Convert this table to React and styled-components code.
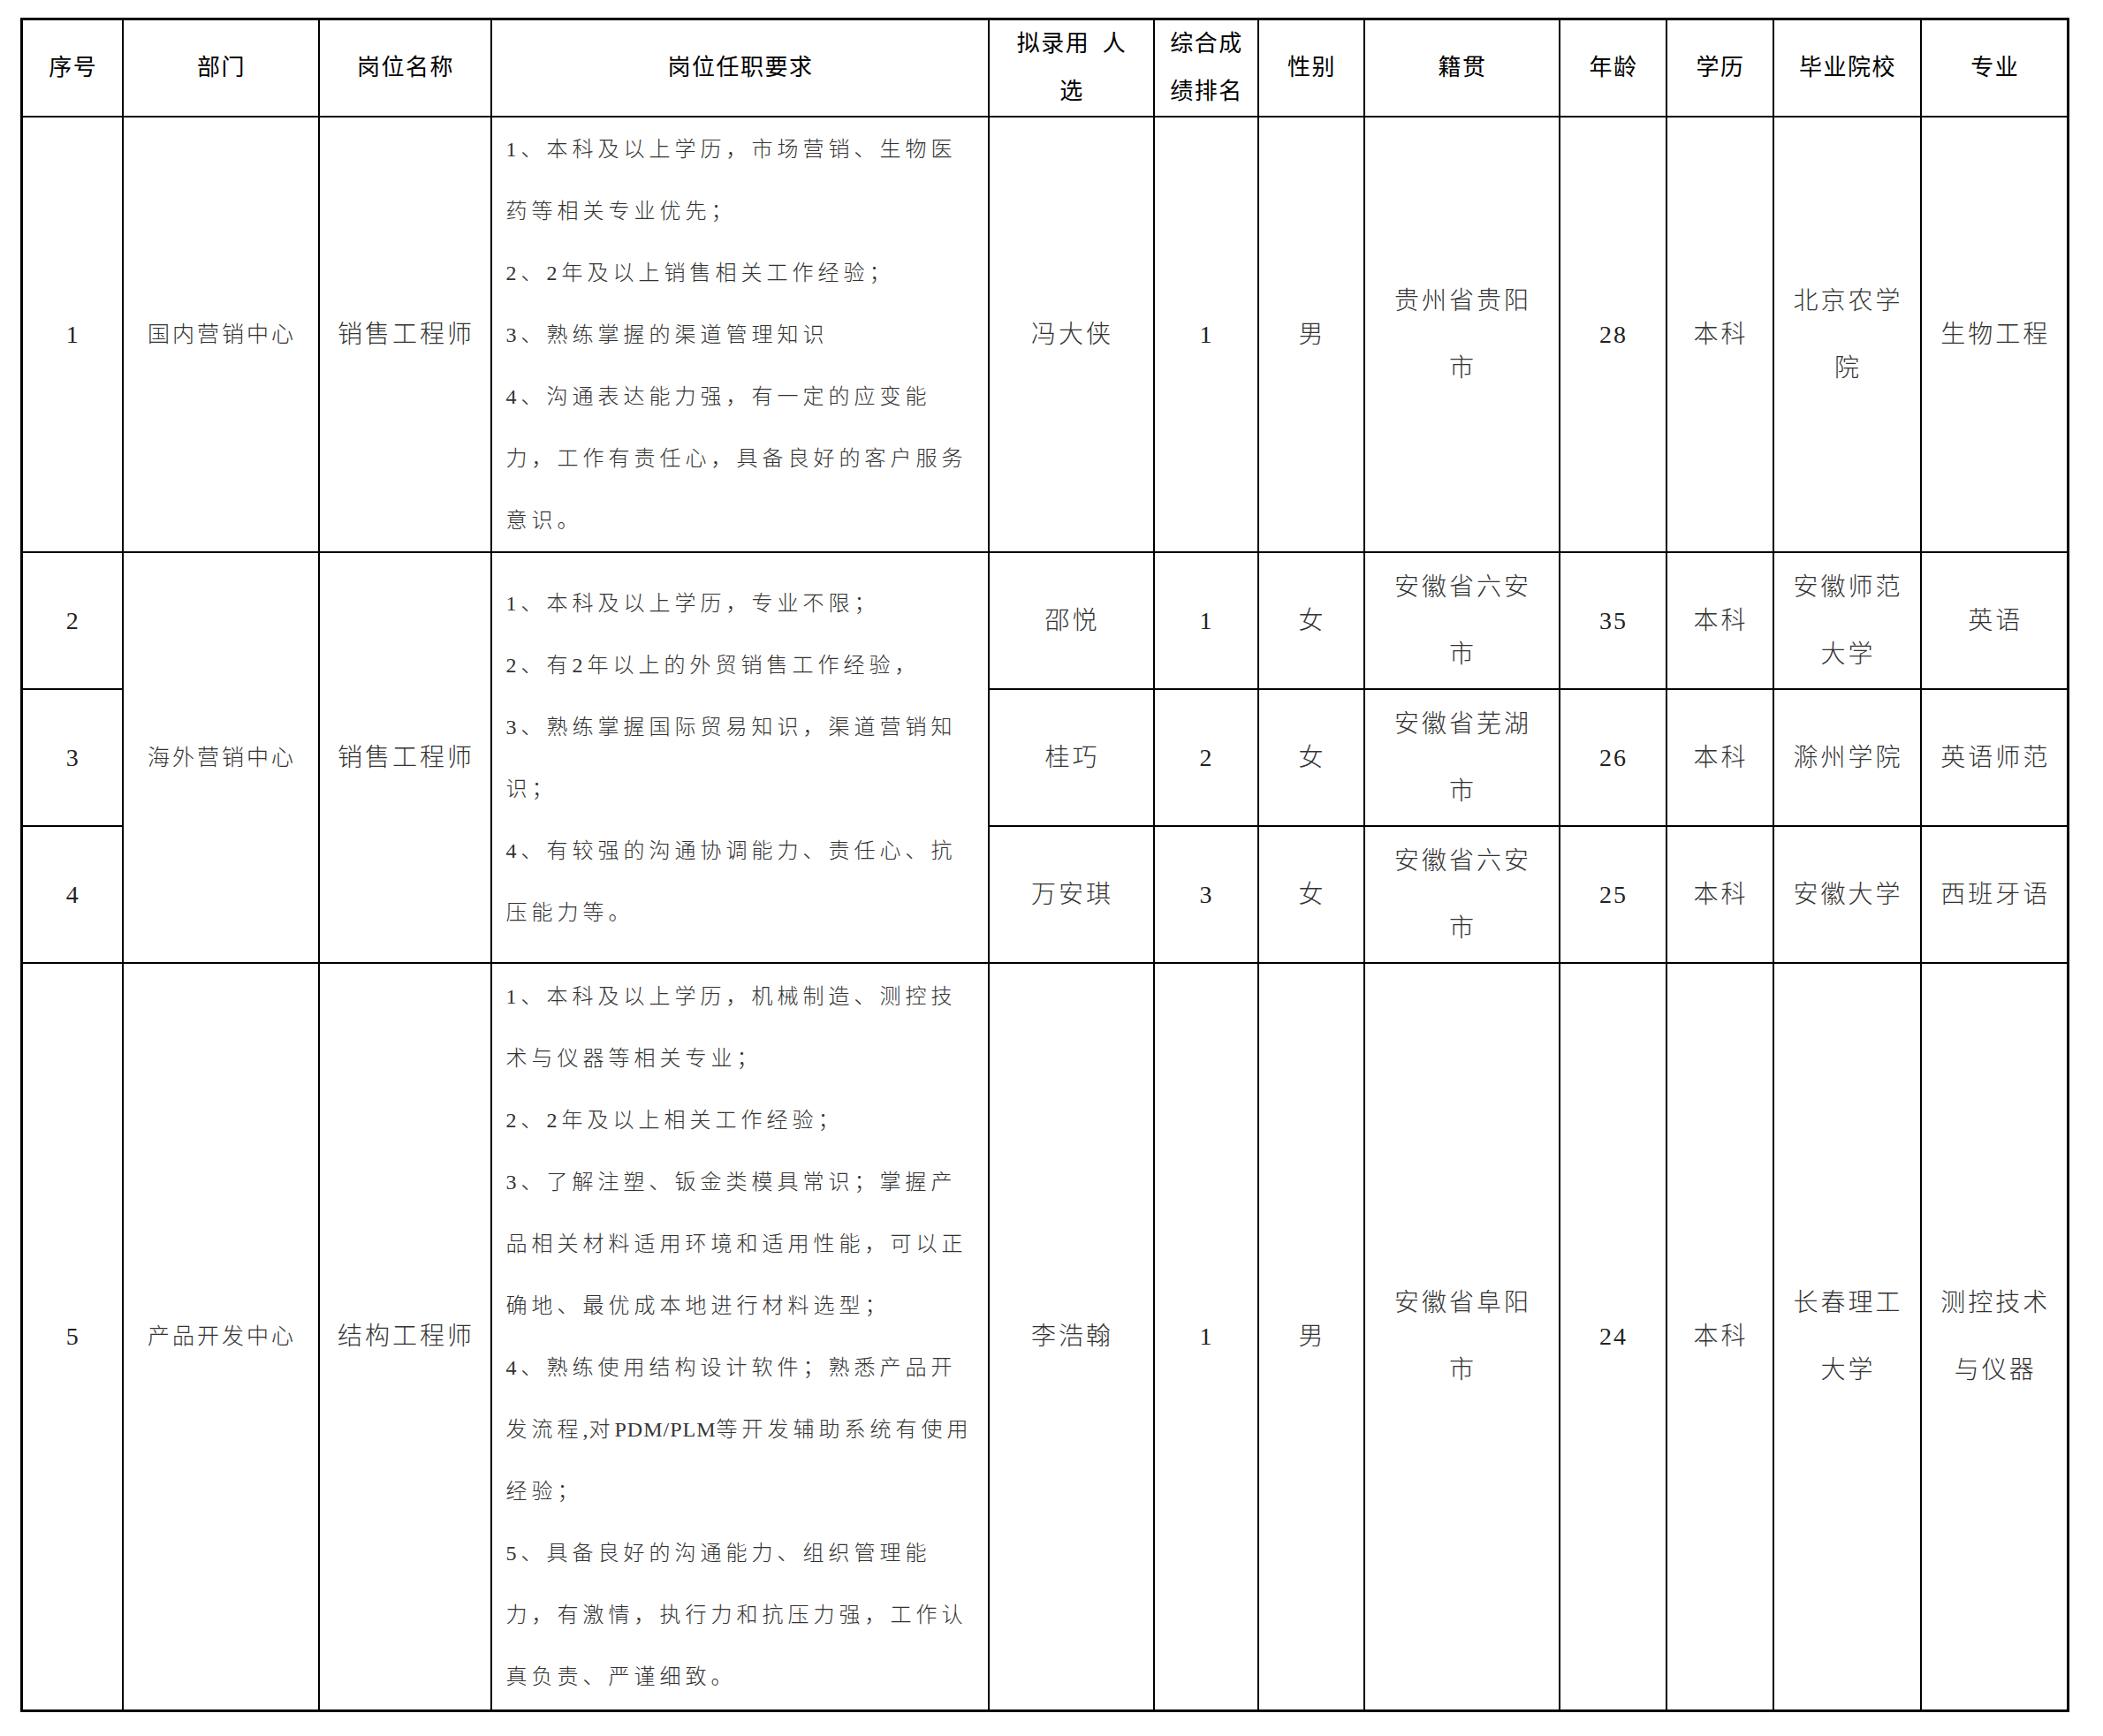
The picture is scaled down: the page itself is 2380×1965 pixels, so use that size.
import styled, { createGlobalStyle, css } from "styled-components";

// ── Data ──────────────────────────────────────────────────

const columns = [
  { key: "no", label: "序号", width: 114 },
  { key: "dept", label: "部门", width: 222 },
  { key: "post", label: "岗位名称", width: 195 },
  { key: "req", label: "岗位任职要求", width: 563 },
  { key: "name", label: "拟录用\u2002人\n选", width: 187 },
  { key: "rank", label: "综合成\n绩排名", width: 118 },
  { key: "sex", label: "性别", width: 120 },
  { key: "origin", label: "籍贯", width: 221 },
  { key: "age", label: "年龄", width: 121 },
  { key: "edu", label: "学历", width: 121 },
  { key: "school", label: "毕业院校", width: 167 },
  { key: "major", label: "专业", width: 167 },
];

const tableWidth = columns.reduce((sum, c) => sum + c.width, 0);

const groups = [
  {
    dept: "国内营销中心",
    post: "销售工程师",
    req: [
      "1、本科及以上学历，市场营销、生物医",
      "药等相关专业优先；",
      "2、2年及以上销售相关工作经验；",
      "3、熟练掌握的渠道管理知识",
      "4、沟通表达能力强，有一定的应变能",
      "力，工作有责任心，具备良好的客户服务",
      "意识。",
    ],
    people: [
      { no: 1, name: "冯大侠", rank: 1, sex: "男", origin: "贵州省贵阳\n市", age: 28, edu: "本科", school: "北京农学\n院", major: "生物工程", h: 493 },
    ],
  },
  {
    dept: "海外营销中心",
    post: "销售工程师",
    req: [
      "1、本科及以上学历，专业不限；",
      "2、有2年以上的外贸销售工作经验，",
      "3、熟练掌握国际贸易知识，渠道营销知",
      "识；",
      "4、有较强的沟通协调能力、责任心、抗",
      "压能力等。",
    ],
    people: [
      { no: 2, name: "邵悦", rank: 1, sex: "女", origin: "安徽省六安\n市", age: 35, edu: "本科", school: "安徽师范\n大学", major: "英语", h: 155 },
      { no: 3, name: "桂巧", rank: 2, sex: "女", origin: "安徽省芜湖\n市", age: 26, edu: "本科", school: "滁州学院", major: "英语师范", h: 155 },
      { no: 4, name: "万安琪", rank: 3, sex: "女", origin: "安徽省六安\n市", age: 25, edu: "本科", school: "安徽大学", major: "西班牙语", h: 155 },
    ],
  },
  {
    dept: "产品开发中心",
    post: "结构工程师",
    req: [
      "1、本科及以上学历，机械制造、测控技",
      "术与仪器等相关专业；",
      "2、2年及以上相关工作经验；",
      "3、了解注塑、钣金类模具常识；掌握产",
      "品相关材料适用环境和适用性能，可以正",
      "确地、最优成本地进行材料选型；",
      "4、熟练使用结构设计软件；熟悉产品开",
      "发流程,对PDM/PLM等开发辅助系统有使用",
      "经验；",
      "5、具备良好的沟通能力、组织管理能",
      "力，有激情，执行力和抗压力强，工作认",
      "真负责、严谨细致。",
    ],
    people: [
      { no: 5, name: "李浩翰", rank: 1, sex: "男", origin: "安徽省阜阳\n市", age: 24, edu: "本科", school: "长春理工\n大学", major: "测控技术\n与仪器", h: 846 },
    ],
  },
];

// ── Styles ────────────────────────────────────────────────

const GlobalStyle = createGlobalStyle`
  html, body {
    margin: 0;
    background: #ffffff;
  }
  body {
    font-family: "Liberation Serif", "Noto Sans CJK SC", serif;
    color: #333;
  }
`;

const Page = styled.div`
  min-height: 1965px;
  box-sizing: border-box;
  padding: 20px 0 0 23px;
  background: #ffffff;
`;

const Sheet = styled.table`
  border-collapse: collapse;
  table-layout: fixed;
  width: ${p => p.$w}px;
  border: 3px solid #000;
`;

const Row = styled.tr`
  height: ${p => p.$h}px;
`;

const HeadCell = styled.th`
  border: 2px solid #000;
  padding: 0 4px 0 6px;
  font-weight: 400;
  font-size: 26px;
  letter-spacing: 1.5px;
  line-height: 54px;
  color: #000;
  text-align: center;
  vertical-align: middle;
  white-space: pre-line;
`;

const kinds = {
  num: css`
    font-size: 28px;
    letter-spacing: 2px;
    padding-left: 8px;
    color: #222;
  `,
  dept: css`
    font-size: 25px;
    letter-spacing: 3px;
    padding-left: 9px;
  `,
  text: css`
    font-size: 28px;
    letter-spacing: 3px;
    padding-left: 9px;
  `,
};

const Cell = styled.td`
  border: 2px solid #000;
  padding: 0 6px;
  font-weight: 300;
  line-height: 76px;
  text-align: center;
  vertical-align: middle;
  white-space: pre-line;
  ${p => kinds[p.$kind || "text"]}
`;

const ReqCell = styled.td`
  border: 2px solid #000;
  padding: 0 10px 0 16px;
  vertical-align: middle;
  text-align: left;
`;

const ReqLine = styled.div`
  font-size: 24px;
  font-weight: 300;
  letter-spacing: 5px;
  line-height: 70px;
  white-space: nowrap;
`;

const Latin = styled.span`
  letter-spacing: 1px;
`;

// Latin runs (PDM/PLM) sit tight, without the CJK tracking
function renderLine(line) {
  return line.split(/([A-Za-z/,]+)/).map((part, i) =>
    /^[A-Za-z/,]+$/.test(part) ? <Latin key={i}>{part}</Latin> : part
  );
}

// ── App ───────────────────────────────────────────────────

export default function App() {
  return (
    <Page>
      <GlobalStyle />
      <Sheet $w={tableWidth}>
        <colgroup>
          {columns.map(c => (
            <col key={c.key} style={{ width: c.width }} />
          ))}
        </colgroup>
        <thead>
          <Row $h={107}>
            {columns.map(c => (
              <HeadCell key={c.key}>{c.label}</HeadCell>
            ))}
          </Row>
        </thead>
        <tbody>
          {groups.flatMap(g =>
            g.people.map((p, i) => (
              <Row key={p.no} $h={p.h}>
                <Cell $kind="num">{p.no}</Cell>
                {i === 0 && (
                  <>
                    <Cell $kind="dept" rowSpan={g.people.length}>{g.dept}</Cell>
                    <Cell rowSpan={g.people.length}>{g.post}</Cell>
                    <ReqCell rowSpan={g.people.length}>
                      {g.req.map((line, j) => (
                        <ReqLine key={j}>{renderLine(line)}</ReqLine>
                      ))}
                    </ReqCell>
                  </>
                )}
                <Cell>{p.name}</Cell>
                <Cell $kind="num">{p.rank}</Cell>
                <Cell>{p.sex}</Cell>
                <Cell>{p.origin}</Cell>
                <Cell $kind="num">{p.age}</Cell>
                <Cell>{p.edu}</Cell>
                <Cell>{p.school}</Cell>
                <Cell>{p.major}</Cell>
              </Row>
            ))
          )}
        </tbody>
      </Sheet>
    </Page>
  );
}
